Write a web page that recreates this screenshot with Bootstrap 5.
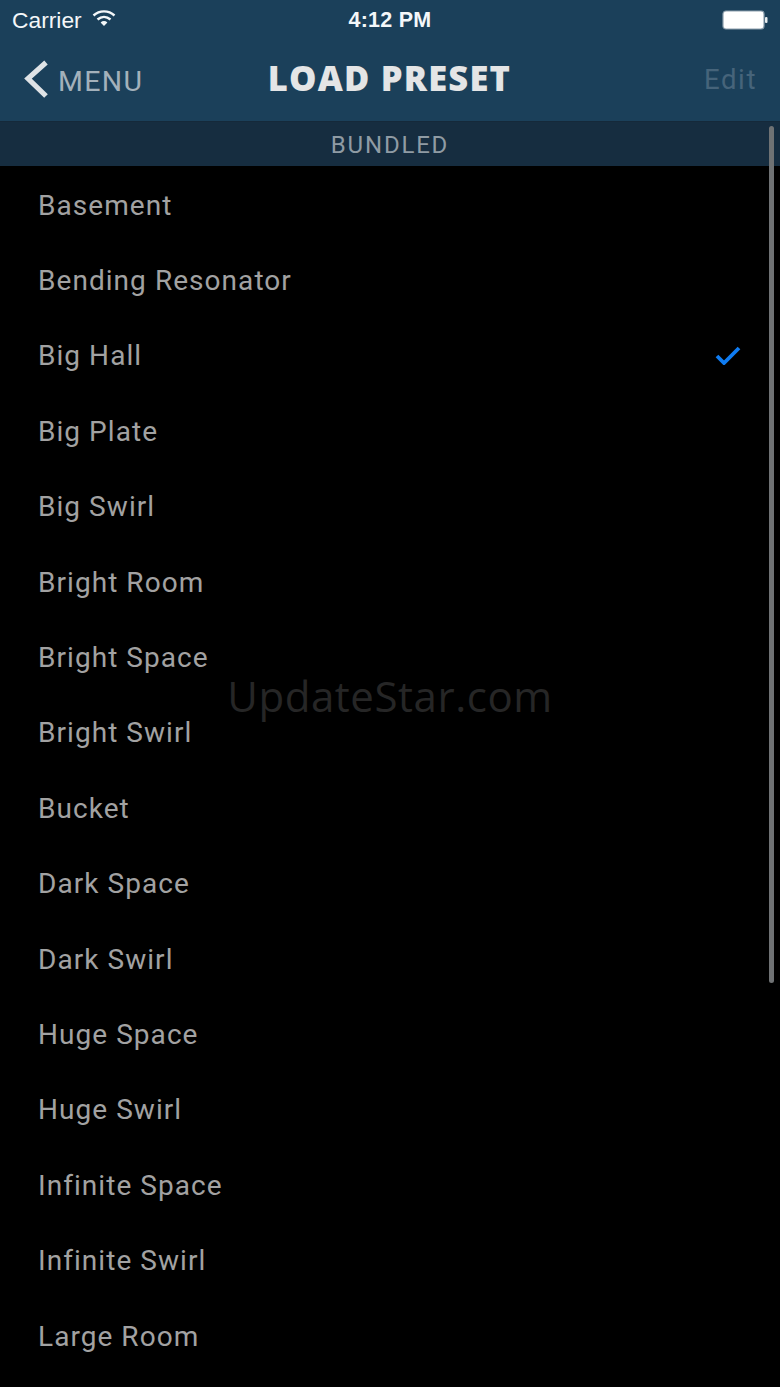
<!doctype html>
<html lang="en"><head><meta charset="utf-8"><title>Load Preset</title>
<link rel="stylesheet" href="https://cdn.jsdelivr.net/npm/bootstrap@5.3.0/dist/css/bootstrap.min.css">
<style>
html,body{height:100%;}
body{background:#000;font-family:Roboto,"Liberation Sans",sans-serif;overflow:hidden;}
.phone{position:relative;width:780px;height:1387px;overflow:hidden;background:#000;}
.top-area{background:#1b405a;height:121px;}
.status-row{height:40px;padding:0 12px;color:#f4f7f9;font-family:"Liberation Sans",Arial,sans-serif;font-size:22.8px;}
.status-left,.status-right{width:150px;}
.status-left{gap:10px;}
.status-time{font-weight:700;font-size:21.5px;letter-spacing:.25px;}
.nav-row{height:81px;padding:0 23px 0 22px;}
.nav-side{width:150px;}
.back-chevron{margin-top:-3px;}
.back-label{color:#a3b1bb;font-size:28.5px;letter-spacing:1.35px;line-height:1;margin-top:3px;}
.nav-heading{color:#e4e5e6;font-family:"Open Sans",Roboto,sans-serif;font-size:34.5px;font-weight:800;letter-spacing:1.2px;line-height:1;margin:-5px 0 0;}
.edit-label{color:#46647a;font-size:27.5px;letter-spacing:1.6px;line-height:1;margin-top:3px;}
.section-bar{height:45px;background:#162d40;border-top:1px solid #15293a;color:#8f9ba4;font-size:24px;letter-spacing:1.8px;padding-top:2px;}
.preset-list{--bs-list-group-bg:transparent;--bs-list-group-border-width:0;--bs-list-group-color:#a2a2a2;}
.preset-row{height:75.4px;padding:0 39px 0 38px;font-size:28px;letter-spacing:1.05px;position:relative;top:2px;}
.preset-check{margin-bottom:2px;}
.watermark{position:absolute;left:0;right:0;top:668px;text-align:center;color:#262626;font-family:"Open Sans",sans-serif;font-size:42px;letter-spacing:.55px;line-height:56px;}
.scroll-thumb{position:absolute;left:769px;top:126px;width:5px;height:857px;border-radius:3px;background:#6f7274;}
</style></head>
<body>
<div class="phone">
  <header class="top-area">
    <div class="status-row d-flex align-items-center justify-content-between">
      <div class="status-left d-flex align-items-center"><span>Carrier</span>
        <svg width="24" height="18" viewBox="0 0 24 18" class="mb-1" aria-hidden="true"><path d="M1.5 6.5C7.5 1 16.5 1 22.5 6.5" fill="none" stroke="#f4f7f9" stroke-width="2.4"/><path d="M5.5 10.5C9.5 7 14.5 7 18.5 10.5" fill="none" stroke="#f4f7f9" stroke-width="2.4"/><path d="M8.6 13.4C10.6 11.6 13.4 11.6 15.4 13.4L12 17Z" fill="#f4f7f9"/></svg>
      </div>
      <div class="status-time">4:12 PM</div>
      <div class="status-right d-flex justify-content-end align-items-center">
        <svg width="46" height="20" viewBox="0 0 46 20" aria-hidden="true"><rect x="1" y="1" width="41" height="18" rx="3" fill="#fff" stroke="#8ea0ae" stroke-width="1.2"/><rect x="43" y="7" width="2.5" height="6" rx="1" fill="#e8edf0"/></svg>
      </div>
    </div>
    <nav class="nav-row d-flex align-items-center justify-content-between">
      <div class="nav-side d-flex align-items-center gap-2">
        <svg class="back-chevron" width="28" height="42" viewBox="0 0 28 42" aria-hidden="true"><path d="M24 4.5 6 20.5 24 38" fill="none" stroke="#dfe3e6" stroke-width="5.2"/></svg>
        <span class="back-label">MENU</span>
      </div>
      <h1 class="nav-heading">LOAD PRESET</h1>
      <div class="nav-side text-end"><span class="edit-label">Edit</span></div>
    </nav>
  </header>
  <div class="section-bar d-flex align-items-center justify-content-center">BUNDLED</div>
  <ul class="list-group list-group-flush preset-list">
    <li class="list-group-item preset-row d-flex align-items-center justify-content-between">Basement</li>
    <li class="list-group-item preset-row d-flex align-items-center justify-content-between">Bending Resonator</li>
    <li class="list-group-item preset-row d-flex align-items-center justify-content-between">Big Hall
      <svg class="preset-check" width="26" height="20" viewBox="0 0 26 20" aria-hidden="true"><path d="M2 11 9 18 24 3" fill="none" stroke="#0f7cf2" stroke-width="3.8"/></svg></li>
    <li class="list-group-item preset-row d-flex align-items-center justify-content-between">Big Plate</li>
    <li class="list-group-item preset-row d-flex align-items-center justify-content-between">Big Swirl</li>
    <li class="list-group-item preset-row d-flex align-items-center justify-content-between">Bright Room</li>
    <li class="list-group-item preset-row d-flex align-items-center justify-content-between">Bright Space</li>
    <li class="list-group-item preset-row d-flex align-items-center justify-content-between">Bright Swirl</li>
    <li class="list-group-item preset-row d-flex align-items-center justify-content-between">Bucket</li>
    <li class="list-group-item preset-row d-flex align-items-center justify-content-between">Dark Space</li>
    <li class="list-group-item preset-row d-flex align-items-center justify-content-between">Dark Swirl</li>
    <li class="list-group-item preset-row d-flex align-items-center justify-content-between">Huge Space</li>
    <li class="list-group-item preset-row d-flex align-items-center justify-content-between">Huge Swirl</li>
    <li class="list-group-item preset-row d-flex align-items-center justify-content-between">Infinite Space</li>
    <li class="list-group-item preset-row d-flex align-items-center justify-content-between">Infinite Swirl</li>
    <li class="list-group-item preset-row d-flex align-items-center justify-content-between">Large Room</li>
  </ul>
  <div class="watermark">UpdateStar.com</div>
  <div class="scroll-thumb"></div>
</div>
<script src="https://cdn.jsdelivr.net/npm/bootstrap@5.3.0/dist/js/bootstrap.bundle.min.js"></script>
</body></html>
